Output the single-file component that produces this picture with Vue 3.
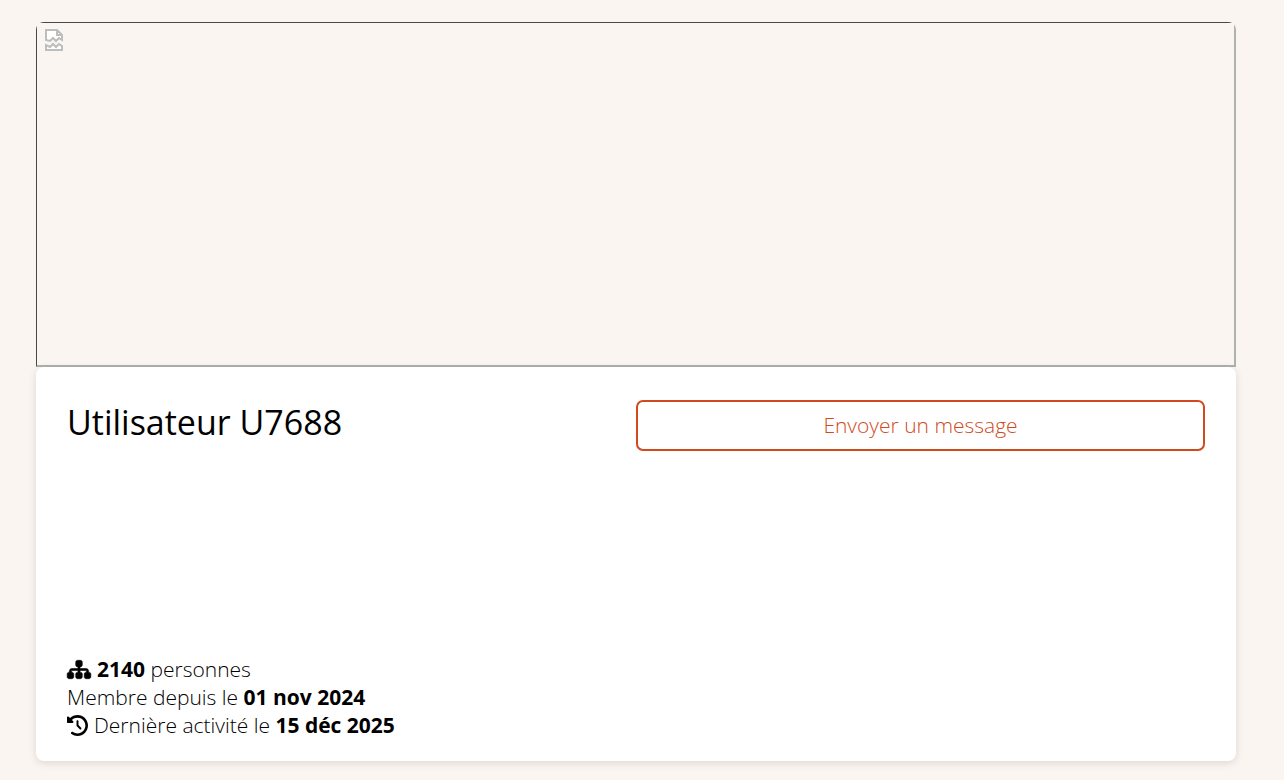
<script setup>
import { ref } from 'vue'

const utilisateur = ref({
  nom: 'Utilisateur U7688',
  personnes: 2140,
  inscription: '01 nov 2024',
  activite: '15 déc 2025'
})
</script>

<template>
  <main class="page">
    <div class="cover">
      <div class="photo" role="img" aria-label="Photo de couverture">
        <svg class="broken" viewBox="0 0 20 24" aria-hidden="true">
          <path d="M2 12V2h11l5 5v6l-3-2-3 3-3-3-3 3z" fill="#fff" />
          <path d="M2 22v-5l4 2 3-3 3 3 3-3 3 2v4z" fill="#fff" />
          <path d="M2 12V2h11l5 5v5l-3-2-3 3-3-3-3 3zM13 2v5h5M2 22v-5l4 2 3-3 3 3 3-3 3 2v4z" fill="none" stroke="#bdbdbd" stroke-width="2" />
        </svg>
      </div>
    </div>
    <section class="card">
      <div class="entete">
        <h1>{{ utilisateur.nom }}</h1>
        <button type="button" class="message">Envoyer un message</button>
      </div>
      <div class="infos">
        <p>
          <svg class="arbre" viewBox="0 0 576 512" aria-hidden="true">
            <path d="M208 80c0-26.500 21.500-48 48-48h64c26.500 0 48 21.500 48 48v64c0 26.500-21.500 48-48 48h-8v40h152c30.900 0 56 25.100 56 56v32h8c26.500 0 48 21.500 48 48v64c0 26.500-21.500 48-48 48h-64c-26.500 0-48-21.500-48-48v-64c0-26.500 21.500-48 48-48h8v-32c0-4.400-3.600-8-8-8H312v40h8c26.500 0 48 21.500 48 48v64c0 26.500-21.500 48-48 48h-64c-26.500 0-48-21.500-48-48v-64c0-26.500 21.500-48 48-48h8v-40H112c-4.400 0-8 3.600-8 8v32h8c26.500 0 48 21.500 48 48v64c0 26.500-21.500 48-48 48H48c-26.500 0-48-21.500-48-48v-64c0-26.500 21.500-48 48-48h8v-32c0-30.900 25.100-56 56-56h152v-40h-8c-26.500 0-48-21.500-48-48V80z" stroke="#000" stroke-width="14" />
          </svg>
          <span><b>{{ utilisateur.personnes }}</b> personnes</span>
        </p>
        <p><span>Membre depuis le <b>{{ utilisateur.inscription }}</b></span></p>
        <p>
          <svg class="historique" viewBox="0 0 512 512" aria-hidden="true">
            <path d="M75 75L41 41C25.900 25.900 0 36.600 0 57.900V168c0 13.300 10.700 24 24 24h110.100c21.400 0 32.100-25.900 17-41l-30.800-30.800C155 85.500 203 64 256 64c106 0 192 86 192 192s-86 192-192 192c-40.800 0-78.600-12.700-109.700-34.400-14.500-10.100-34.400-6.600-44.600 7.900s-6.600 34.400 7.900 44.600C151.200 495 201.700 512 256 512c141.400 0 256-114.600 256-256S397.400 0 256 0C185.300 0 121.300 28.700 75 75zm181 53c-13.300 0-24 10.700-24 24v104c0 6.400 2.500 12.500 7 17l72 72c9.400 9.400 24.600 9.400 33.900 0s9.400-24.600 0-33.900l-65-65V152c0-13.300-10.700-24-24-24z" />
          </svg>
          <span>Dernière activité le <b>{{ utilisateur.activite }}</b></span>
        </p>
      </div>
    </section>
  </main>
</template>

<style>
body {
  margin: 0;
  background: #faf5f1;
}
</style>

<style scoped>
.page {
  padding: 22px 48px 18px 36px;
  color: #000;
  font-family: "Open Sans", "Liberation Sans", sans-serif;
  font-size: 21px;
  font-weight: 300;
  line-height: 28px;
}

.cover {
  border-radius: 8px 8px 0 0;
  overflow: hidden;
}

.photo {
  box-sizing: border-box;
  height: 345px;
  padding: 5px 7px;
  border-style: solid;
  border-width: 1px 2px 2px 1px;
  border-color: #4b4745 #b0b0ae #b0b0ae #4b4745;
}

.broken {
  display: block;
  width: 20px;
  height: 24px;
}

.card {
  display: flex;
  flex-direction: column;
  gap: 204px;
  padding: 33px 31px 22px;
  border-radius: 8px;
  background: #fff;
  box-shadow: 0 2px 8px rgba(0, 0, 0, 0.12);
}

.entete {
  display: grid;
  grid-template-columns: 1fr 1fr;
  align-items: start;
}

h1 {
  margin: 0;
  font-size: 34px;
  font-weight: 400;
  line-height: 44px;
}

.message {
  padding: 9px 16px 10px;
  border: 2px solid #d04a1d;
  border-radius: 7px;
  background: #fff;
  color: #d04a1d;
  font: inherit;
  cursor: pointer;
}

.infos p {
  display: flex;
  align-items: center;
  gap: 6px;
  margin: 0;
}

b {
  font-weight: 700;
}

.arbre {
  width: 24px;
  height: 21px;
  overflow: visible;
}

.historique {
  width: 21px;
  height: 21px;
}
</style>
